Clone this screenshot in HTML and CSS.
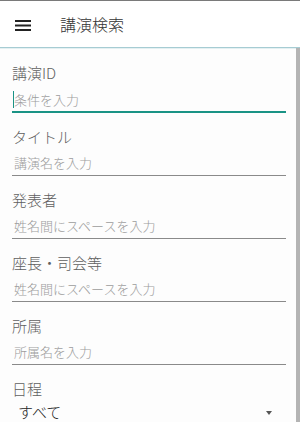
FILE: index.html
```html
<!DOCTYPE html>
<html lang="ja">
<head>
<meta charset="utf-8">
<title>講演検索</title>
<link rel="stylesheet" href="styles.css">
</head>
<body>
<div class="app">
  <header class="topbar">
    <button class="menu-btn" aria-label="menu">
      <svg width="16" height="11" viewBox="0 0 16 11"><rect x="0" y="0" width="16" height="2" fill="#222"/><rect x="0" y="4.5" width="16" height="2" fill="#222"/><rect x="0" y="9" width="16" height="2" fill="#222"/></svg>
    </button>
    <h1 class="title">講演検索</h1>
  </header>
  <div class="body-row">
    <main class="form">
      <div class="field">
        <label class="label">講演ID</label>
        <div class="input focused"><span class="caret"></span><span class="ph">条件を入力</span></div>
      </div>
      <div class="field">
        <label class="label">タイトル</label>
        <div class="input"><span class="ph">講演名を入力</span></div>
      </div>
      <div class="field">
        <label class="label">発表者</label>
        <div class="input"><span class="ph">姓名間にスペースを入力</span></div>
      </div>
      <div class="field">
        <label class="label">座長・司会等</label>
        <div class="input"><span class="ph">姓名間にスペースを入力</span></div>
      </div>
      <div class="field">
        <label class="label">所属</label>
        <div class="input"><span class="ph">所属名を入力</span></div>
      </div>
      <div class="field">
        <label class="label">日程</label>
        <div class="select"><span class="value">すべて</span><span class="arrow"></span></div>
      </div>
    </main>
    <div class="scrollbar"></div>
  </div>
</div>
</body>
</html>
```
FILE: styles.css
```css
html, body {
  margin: 0;
  padding: 0;
  height: 100%;
  overflow: hidden;
}
body {
  font-family: "Noto Sans CJK JP", "Noto Sans", Roboto, sans-serif;
  font-weight: 300;
  background: #fdfdfd;
}
.app {
  display: flex;
  flex-direction: column;
  height: 422px;
}
.topbar {
  display: flex;
  align-items: center;
  height: 46px;
  background: #fff;
  border-top: 1px solid #7a7a7a;
  border-bottom: 1px solid #a6ccd3;
  box-shadow: 0 1px 0 #e4f0f2;
  flex: none;
}
.menu-btn {
  border: 0;
  background: none;
  padding: 0;
  margin: 0 0 0 15px;
  width: 16px;
  height: 11px;
  display: flex;
  margin-top: 2px;
}
.title {
  margin: 0 0 0 29px;
  font-size: 16px;
  font-weight: 300;
  color: #333;
  line-height: 20px;
  letter-spacing: 0;
}
.body-row {
  flex: 1;
  display: flex;
  min-height: 0;
}
.form {
  flex: 1;
  padding: 15px 10px 0 12px;
  display: flex;
  flex-direction: column;
  gap: 14px;
}
.scrollbar {
  width: 4px;
  flex: none;
  background: #b4b4b4;
}
.field {
  display: flex;
  flex-direction: column;
}
.label {
  font-size: 15px;
  line-height: 20px;
  color: #5f5f5f;
}
.input {
  border-bottom: 1px solid #8a8a8a;
  display: flex;
  align-items: flex-end;
  padding-left: 2px;
  box-sizing: border-box;
  height: 29px;
  padding-bottom: 3px;
}
.input.focused {
  border-bottom: 2px solid #1a9385;
  height: 30px;
  padding-bottom: 2px;
  padding-left: 1px;
}
.caret {
  width: 1px;
  height: 17px;
  background: #1a9385;
  align-self: flex-end;
  margin-bottom: 1px;
}
.ph {
  font-size: 13px;
  line-height: 18px;
  color: #9c9c9c;
}
.select {
  display: flex;
  align-items: center;
  justify-content: space-between;
  height: 26px;
  padding: 0 14px 0 6px;
}
.value {
  font-size: 15px;
  color: #222;
  line-height: 20px;
}
.arrow {
  width: 0;
  height: 0;
  border-left: 3.5px solid transparent;
  border-right: 3.5px solid transparent;
  border-top: 4px solid #555;
  margin-top: 2px;
}
```
